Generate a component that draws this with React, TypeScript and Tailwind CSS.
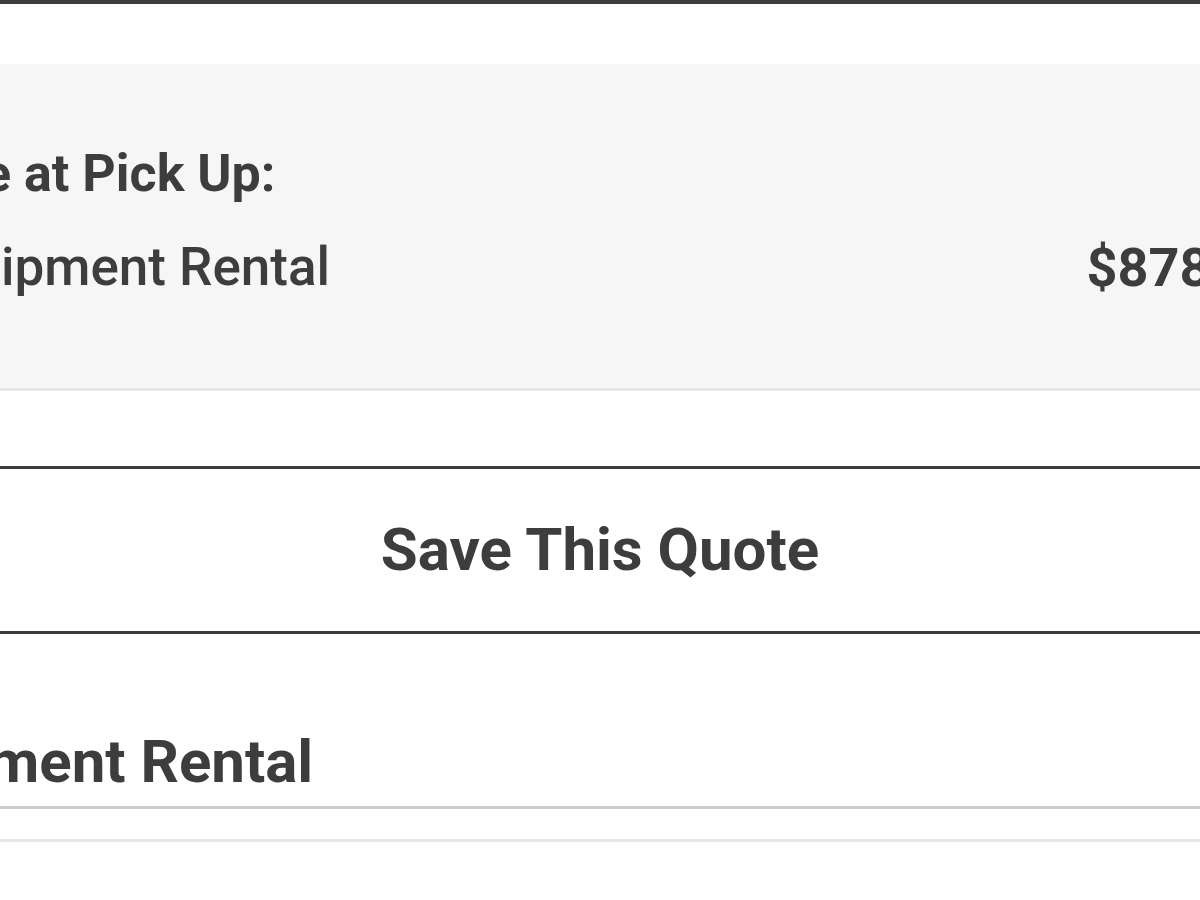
export default function App() {
  return (
    <div className="w-[1200px] h-[900px] overflow-hidden bg-white font-['Roboto',sans-serif] text-[#3d3d3d]">
      <div className="ml-[-180px] w-[1560px]">
        {/* bottom edge of the block above */}
        <div className="h-[4px] bg-[#3d3d3d]" />

        {/* amount due panel */}
        <div className="mt-[60px] bg-[#f6f6f6] border-b-[3px] border-[#e6e6e6] pl-[100px] pr-[92px] pt-[77px] pb-[88px]">
          <h3 className="text-[52px] leading-[65px] font-bold">Due at Pick Up:</h3>
          <div className="mt-[29px] flex items-center justify-between text-[53px] leading-[65px]">
            <span className="ml-[-8px] font-medium">Equipment Rental</span>
            <span className="font-bold text-[54px]">$878.00</span>
          </div>
        </div>

        {/* save quote button */}
        <button className="mt-[75px] w-full h-[168px] flex items-center justify-center border-y-[3px] border-[#3d3d3d] bg-white text-[60px] leading-[72px] font-bold cursor-pointer">
          Save This Quote
        </button>

        {/* next section */}
        <div className="mt-[92px] pl-[17px] pb-[8px] border-b-[3px] border-[#cccccc]">
          <h2 className="text-[60px] leading-[72px] font-bold">Equipment Rental</h2>
        </div>
        <div className="mt-[30px] h-[3px] bg-[#e6e6e6]" />
      </div>
    </div>
  );
}
